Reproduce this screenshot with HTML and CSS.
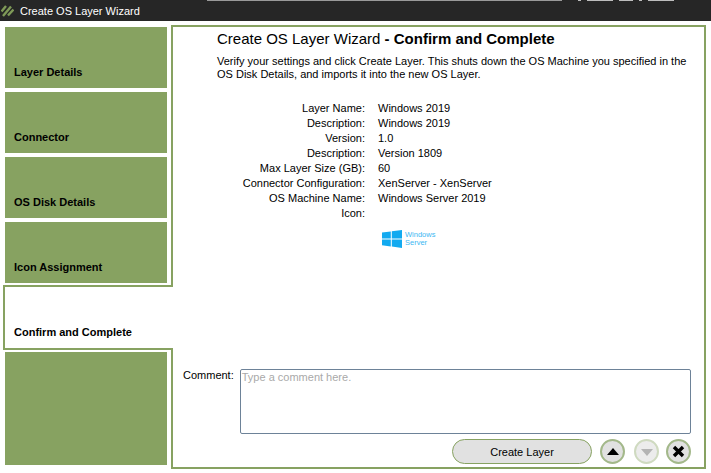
FILE: index.html
```html
<!DOCTYPE html>
<html lang="en">
<head>
<meta charset="utf-8">
<title>Create OS Layer Wizard</title>
<link rel="stylesheet" href="styles.css">
</head>
<body>
<header class="titlebar">
  <div class="topstrip">
    <span class="strip-line"></span>
    <span class="strip-marks"><i class="mark-s"></i><i class="mark-l"></i><i class="mark-m"></i><i class="mark-s"></i><i class="mark-l"></i></span>
  </div>
  <div class="titlerow">
    <svg class="logo" width="13" height="12" viewBox="0 0 13 12"><path d="M0.5 6.5 L5 1 M2 11 L10 1.5 M7 10.5 L12.5 4.5" stroke="#7f9a58" stroke-width="2.4" fill="none"/></svg>
    <span class="title">Create OS Layer Wizard</span>
  </div>
</header>
<div class="wizard">
  <nav class="steps">
    <div class="step step-gap"><span>Layer Details</span></div>
    <div class="step step-gap"><span>Connector</span></div>
    <div class="step step-gap"><span>OS Disk Details</span></div>
    <div class="step"><span>Icon Assignment</span></div>
    <div class="step step-active"><span>Confirm and Complete</span></div>
    <div class="step step-empty"></div>
  </nav>
  <main class="panel">
    <h1 class="heading">Create OS Layer Wizard <b>- Confirm and Complete</b></h1>
    <p class="intro">Verify your settings and click Create Layer. This shuts down the OS Machine you specified in the OS Disk Details, and imports it into the new OS Layer.</p>
    <dl class="summary">
      <dt>Layer Name:</dt><dd>Windows 2019</dd>
      <dt>Description:</dt><dd>Windows 2019</dd>
      <dt>Version:</dt><dd>1.0</dd>
      <dt>Description:</dt><dd>Version 1809</dd>
      <dt>Max Layer Size (GB):</dt><dd>60</dd>
      <dt>Connector Configuration:</dt><dd>XenServer - XenServer</dd>
      <dt>OS Machine Name:</dt><dd>Windows Server 2019</dd>
      <dt>Icon:</dt><dd></dd>
    </dl>
    <div class="osicon">
      <svg width="20" height="18" viewBox="0 0 20 18"><path fill="#12aaf0" d="M0 2.6 L8.8 1.4 V8.4 H0 Z M9.8 1.2 L20 0 V8.4 H9.8 Z M0 9.4 H8.8 V16.4 L0 15.2 Z M9.8 9.4 H20 V18 L9.8 16.6 Z"/></svg>
      <span class="osname">Windows<br>Server</span>
    </div>
    <div class="comment">
      <label class="comment-label" for="c">Comment:</label>
      <textarea class="comment-box" id="c" placeholder="Type a comment here."></textarea>
    </div>
    <div class="actions">
      <button class="create">Create Layer</button>
      <button class="round"><svg width="12" height="8" viewBox="0 0 12 8"><path d="M6 0 L12 7 H0 Z" fill="#000"/></svg></button>
      <button class="round round-off"><svg width="12" height="8" viewBox="0 0 12 8"><path d="M0 1 H12 L6 8 Z" fill="#b4b4b4"/></svg></button>
      <button class="round round-close"><svg width="13" height="13" viewBox="0 0 13 13"><path d="M2 2 L11 11 M11 2 L2 11" stroke="#000" stroke-width="3.4" fill="none"/></svg></button>
    </div>
  </main>
</div>
</body>
</html>
```
FILE: styles.css
```css
* { box-sizing: border-box; }
html, body { margin: 0; padding: 0; height: 473px; overflow: hidden; background: #fff; }
body { font-family: "Liberation Sans", Arial, sans-serif; font-size: 11px; color: #000; }
.titlebar { height: 21px; background: #262626; color: #fff; overflow: hidden; }
.topstrip { height: 1px; display: flex; align-items: flex-start; }
.strip-line { display: block; margin-left: 207px; width: 355px; height: 1px; background: #999; }
.strip-marks { display: flex; gap: 6px; height: 1px; margin-left: 16px; }
.strip-marks i { display: block; height: 1px; background: #bdbdbd; }
.mark-s { width: 3px; }
.mark-m { width: 14px; }
.mark-l { width: 26px; }
.titlerow { display: flex; align-items: center; height: 20px; padding-left: 1px; gap: 6px; }
.title { font-size: 11px; }
.wizard { display: flex; height: 452px; padding-top: 4px; }
.steps { width: 171px; flex: none; display: flex; flex-direction: column; padding-top: 2px; }
.step { height: 61px; width: 162px; margin-left: 5px; background: #87a261; font-weight: bold; font-size: 11px; display: flex; align-items: flex-end; padding: 0 0 10px 9px; }
.step-gap { margin-bottom: 4px; }
.step-active { height: 65px; width: 170px; margin: 2px 0 2px 3px; background: #fff; border: 2px solid #87a261; border-right: 0; padding: 0 0 10px 9px; position: relative; z-index: 1; }
.step-empty { height: 113px; }
.panel { width: 535px; height: 444px; flex: none; border: 2px solid #87a261; display: flex; flex-direction: column; padding: 2px 13px 0 10px; }
.heading { font-size: 15px; font-weight: normal; margin: 0 0 0 34px; line-height: 20px; }
.intro { margin: 6px 0 0 34px; line-height: 13px; }
.summary { display: grid; grid-template-columns: 182px 1fr; column-gap: 13px; margin: 20px 0 0 0; line-height: 15px; }
.summary dt { text-align: right; }
.summary dd { margin: 0; }
.osicon { display: flex; align-items: center; gap: 3px; margin: 8px 0 0 199px; height: 20px; }
.osname { font-size: 7.5px; line-height: 8px; color: #3db8f2; }
.comment { display: flex; gap: 6px; margin-top: 120px; }
.comment-label { line-height: 13px; }
.comment-box { width: 451px; height: 65px; border: 1px solid #6d8298; border-radius: 2px; padding: 1px; font: 11px "Liberation Sans", Arial, sans-serif; resize: none; margin: 0; }
.comment-box::placeholder { color: #a9a9a9; }
.actions { display: flex; align-items: center; margin-top: 5px; justify-content: flex-end; gap: 8px; }
.create { width: 140px; height: 25px; border-radius: 13px; border: 1px solid #87a261; background: #e1e1e1; font: 11px "Liberation Sans", Arial, sans-serif; color: #000; }
.round { width: 25px; height: 25px; border-radius: 50%; border: 2px solid #a3b88a; background: #e1e1e1; padding: 0; display: flex; align-items: center; justify-content: center; }
.round-off { background: #ececec; border-color: #cfdac0; margin-left: 1px; }
.round-close { margin-left: -1px; }
```
